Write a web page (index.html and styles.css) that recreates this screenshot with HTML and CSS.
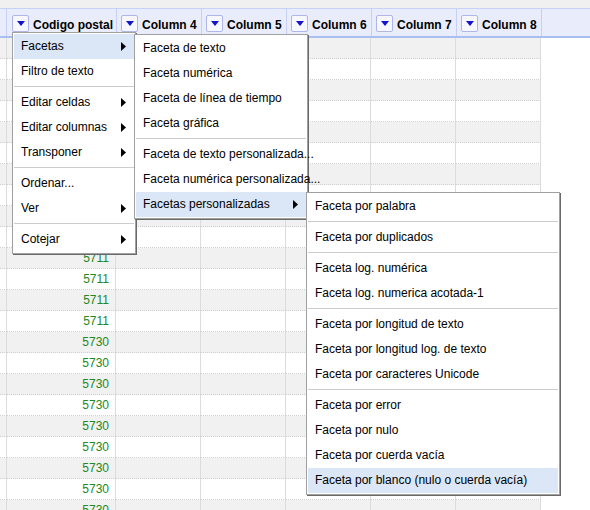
FILE: index.html
```
<!DOCTYPE html>
<html lang="es">
<head>
<meta charset="utf-8">
<title>Facetas</title>
<link rel="stylesheet" href="styles.css">
</head>
<body>
<div class="page">
  <div class="topstrip"></div>
  <div class="header">
    <div class="hcell stub"></div>
    <div class="hcell c1"><span class="dd"><svg width="8" height="5" viewBox="0 0 8 5"><path d="M0 0H8L4 5Z" fill="#1414c8"/></svg></span><span class="hname">Codigo postal</span></div>
    <div class="hcell"><span class="dd"><svg width="8" height="5" viewBox="0 0 8 5"><path d="M0 0H8L4 5Z" fill="#1414c8"/></svg></span><span class="hname">Column 4</span></div>
    <div class="hcell"><span class="dd"><svg width="8" height="5" viewBox="0 0 8 5"><path d="M0 0H8L4 5Z" fill="#1414c8"/></svg></span><span class="hname">Column 5</span></div>
    <div class="hcell"><span class="dd"><svg width="8" height="5" viewBox="0 0 8 5"><path d="M0 0H8L4 5Z" fill="#1414c8"/></svg></span><span class="hname">Column 6</span></div>
    <div class="hcell"><span class="dd"><svg width="8" height="5" viewBox="0 0 8 5"><path d="M0 0H8L4 5Z" fill="#1414c8"/></svg></span><span class="hname">Column 7</span></div>
    <div class="hcell"><span class="dd"><svg width="8" height="5" viewBox="0 0 8 5"><path d="M0 0H8L4 5Z" fill="#1414c8"/></svg></span><span class="hname">Column 8</span></div>
    <div class="hfill"></div>
  </div>
  <div class="rows" id="rows"></div>

  <div class="menu m1">
    <div class="item hl"><span>Facetas</span><svg class="arr" width="5" height="9" viewBox="0 0 5 9"><path d="M0 0L5 4.5L0 9Z"/></svg></div>
    <div class="item"><span>Filtro de texto</span></div>
    <div class="sep"></div>
    <div class="item"><span>Editar celdas</span><svg class="arr" width="5" height="9" viewBox="0 0 5 9"><path d="M0 0L5 4.5L0 9Z"/></svg></div>
    <div class="item"><span>Editar columnas</span><svg class="arr" width="5" height="9" viewBox="0 0 5 9"><path d="M0 0L5 4.5L0 9Z"/></svg></div>
    <div class="item"><span>Transponer</span><svg class="arr" width="5" height="9" viewBox="0 0 5 9"><path d="M0 0L5 4.5L0 9Z"/></svg></div>
    <div class="sep"></div>
    <div class="item"><span>Ordenar...</span></div>
    <div class="item"><span>Ver</span><svg class="arr" width="5" height="9" viewBox="0 0 5 9"><path d="M0 0L5 4.5L0 9Z"/></svg></div>
    <div class="sep"></div>
    <div class="item"><span>Cotejar</span><svg class="arr" width="5" height="9" viewBox="0 0 5 9"><path d="M0 0L5 4.5L0 9Z"/></svg></div>
  </div>

  <div class="menu m2">
    <div class="item"><span>Faceta de texto</span></div>
    <div class="item"><span>Faceta numérica</span></div>
    <div class="item"><span>Faceta de línea de tiempo</span></div>
    <div class="item"><span>Faceta gráfica</span></div>
    <div class="sep"></div>
    <div class="item"><span>Faceta de texto personalizada...</span></div>
    <div class="item"><span>Faceta numérica personalizada...</span></div>
    <div class="item hl"><span>Facetas personalizadas</span><svg class="arr" width="5" height="9" viewBox="0 0 5 9"><path d="M0 0L5 4.5L0 9Z"/></svg></div>
  </div>

  <div class="menu m3">
    <div class="item"><span>Faceta por palabra</span></div>
    <div class="sep"></div>
    <div class="item"><span>Faceta por duplicados</span></div>
    <div class="sep"></div>
    <div class="item"><span>Faceta log. numérica</span></div>
    <div class="item"><span>Faceta log. numerica acotada-1</span></div>
    <div class="sep"></div>
    <div class="item"><span>Faceta por longitud de texto</span></div>
    <div class="item"><span>Faceta por longitud log. de texto</span></div>
    <div class="item"><span>Faceta por caracteres Unicode</span></div>
    <div class="sep"></div>
    <div class="item"><span>Faceta por error</span></div>
    <div class="item"><span>Faceta por nulo</span></div>
    <div class="item"><span>Faceta por cuerda vacía</span></div>
    <div class="item hl"><span>Faceta por blanco (nulo o cuerda vacía)</span></div>
  </div>
</div>
<script src="app.js"></script>
</body>
</html>
```
FILE: app.js
```
(function () {
  var values = [];
  for (var i = 0; i < 10; i++) values.push("");
  for (var a = 0; a < 4; a++) values.push("5711");
  for (var j = 0; j < 9; j++) values.push("5730");
  var rows = document.getElementById("rows");
  values.forEach(function (v, i) {
    var r = document.createElement("div");
    r.className = "row" + (i % 2 === 0 ? " odd" : "");
    var html = '<div class="cell stub"></div><div class="cell c1 num">' + v + '</div>';
    for (var k = 0; k < 5; k++) html += '<div class="cell"></div>';
    html += '<div class="rfill"></div>';
    r.innerHTML = html;
    rows.appendChild(r);
  });
})();
```
FILE: styles.css
```
html, body {
  margin: 0;
  padding: 0;
  background: #fff;
}
body {
  font-family: "Liberation Sans", Arial, sans-serif;
  font-size: 12px;
  color: #000;
  overflow: hidden;
  width: 590px;
  height: 510px;
}
.page {
  position: relative;
  width: 590px;
  height: 510px;
  overflow: hidden;
}
.topstrip {
  height: 8px;
  background: #f0f0f0;
}
.header {
  display: flex;
  height: 27px;
  background: #e9ecfa;
  border-top: 1px solid #c6d2f6;
  border-bottom: 2px solid #a9bff4;
}
.hcell {
  flex: none;
  border-right: 1px solid #c7cff2;
  display: flex;
  align-items: center;
  padding-left: 4px;
  box-sizing: content-box;
  width: 80px;
}
.hcell.stub {
  width: 6px;
  padding-left: 0;
}
.hcell.c1 {
  width: 104px;
  padding-left: 5px;
}
.hfill {
  flex: 1;
}
.dd {
  flex: none;
  width: 15px;
  height: 15px;
  border: 1px solid #aeb6ea;
  border-radius: 2px;
  background: #f6f7ff;
  display: flex;
  align-items: center;
  justify-content: center;
  margin-top: 1px;
}
.dd svg {
  display: block;
}
.hname {
  font-weight: bold;
  margin-left: 4px;
  white-space: nowrap;
  margin-top: 4px;
}
.rows {
  display: flex;
  flex-direction: column;
}
.row {
  display: flex;
  flex: none;
}
.cell {
  flex: none;
  width: 84px;
  height: 20px;
  border-right: 1px solid #dcdcdc;
  border-bottom: 1px dotted #cfcfcf;
}
.row.odd .cell {
  background: #f1f1f1;
}
.cell.stub {
  width: 6px;
}
.cell.c1 {
  width: 108px;
}
.cell.num {
  color: #228822;
  text-align: right;
  line-height: 20px;
  padding-right: 6px;
  box-sizing: content-box;
  width: 102px;
}
.rfill {
  flex: 1;
}
.menu {
  position: absolute;
  background: #fff;
  border: 1px solid #a0a0a0;
  box-shadow: 1px 1px 0 #6a6a6a;
  padding: 1px;
}
.m1 {
  left: 12px;
  top: 32px;
  width: 120px;
  z-index: 1;
}
.m2 {
  left: 134px;
  top: 34px;
  width: 170px;
  z-index: 2;
}
.m3 {
  left: 306px;
  top: 192px;
  width: 250px;
  z-index: 3;
}
.item {
  height: 25px;
  line-height: 25px;
  padding: 0 8px 0 7px;
  display: flex;
  justify-content: space-between;
  align-items: center;
  white-space: nowrap;
}
.item.hl {
  background: #dbe6f6;
}
.arr {
  flex: none;
  fill: #000;
}
.sep {
  margin: 2px 0 3px;
  border-top: 1px solid #cccccc;
}
```
